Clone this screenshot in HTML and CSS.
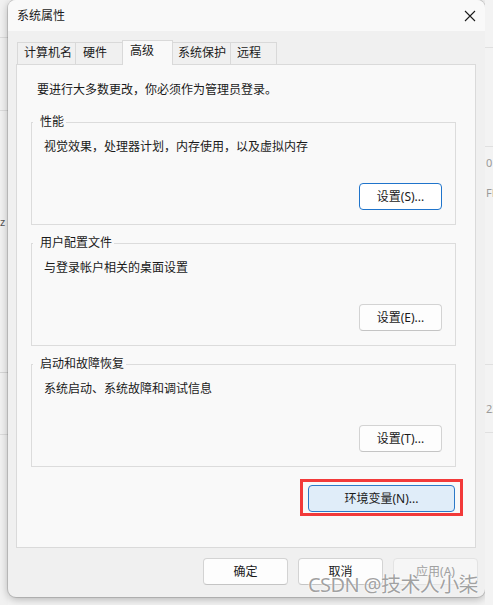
FILE: index.html
```html
<!DOCTYPE html>
<html lang="zh-CN">
<head>
  <meta charset="UTF-8">
  <title>系统属性</title>
  <link rel="stylesheet" href="styles.css">
</head>
<body>
  <div class="side side-left"><span class="frag frag-z">z</span></div>
  <div class="dialog">
    <div class="titlebar">
      <span class="title">系统属性</span>
      <svg class="close" width="12" height="12" viewBox="0 0 12 12">
        <path d="M1 1 L11 11 M11 1 L1 11" stroke="#1b1b1b" stroke-width="1.1" fill="none"/>
      </svg>
    </div>
    <div class="tabs">
      <div class="tab tab-w1">计算机名</div>
      <div class="tab tab-w2">硬件</div>
      <div class="tab tab-w3 active">高级</div>
      <div class="tab tab-w4">系统保护</div>
      <div class="tab tab-w5">远程</div>
    </div>
    <div class="panel">
      <p class="intro">要进行大多数更改，你必须作为管理员登录。</p>
      <fieldset class="group">
        <legend>性能</legend>
        <p class="desc">视觉效果，处理器计划，内存使用，以及虚拟内存</p>
        <div class="group-actions"><button class="btn btn-set focused">设置(S)...</button></div>
      </fieldset>
      <fieldset class="group">
        <legend>用户配置文件</legend>
        <p class="desc">与登录帐户相关的桌面设置</p>
        <div class="group-actions"><button class="btn btn-set">设置(E)...</button></div>
      </fieldset>
      <fieldset class="group">
        <legend>启动和故障恢复</legend>
        <p class="desc">系统启动、系统故障和调试信息</p>
        <div class="group-actions"><button class="btn btn-set">设置(T)...</button></div>
      </fieldset>
      <div class="env-row">
        <div class="highlight"><button class="btn btn-env">环境变量(N)...</button></div>
      </div>
    </div>
    <div class="footer">
      <button class="btn btn-foot">确定</button>
      <button class="btn btn-foot">取消</button>
      <button class="btn btn-foot" disabled>应用(A)</button>
    </div>
    <div class="watermark">CSDN @技术人小柒</div>
  </div>
  <div class="side side-right"><span class="frag frag-0">0</span><span class="frag frag-fd">FD</span><span class="frag frag-22">22</span></div>
</body>
</html>
```

FILE: styles.css
```css
body {
  margin: 0;
  background: #f3f3f3;
  font-family: 'Noto Sans', 'Noto Sans CJK SC', sans-serif;
  font-size: 12px;
  color: #1a1a1a;
  display: flex;
  width: 493px;
  height: 605px;
  overflow: hidden;
}
.side {
  position: relative;
  width: 8px;
  flex: none;
  height: 605px;
  background:
    linear-gradient(#dcdcdc, #dcdcdc) 0 37px / 100% 1px no-repeat,
    linear-gradient(#dcdcdc, #dcdcdc) 0 110px / 100% 1px no-repeat,
    linear-gradient(#d6d6d6, #d6d6d6) 0 372px / 100% 1px no-repeat,
    linear-gradient(#dcdcdc, #dcdcdc) 0 434px / 100% 1px no-repeat,
    #f1f1f1;
}
.side-right {
  background:
    linear-gradient(#e0e0e0, #e0e0e0) 0 47px / 100% 1px no-repeat,
    linear-gradient(#e0e0e0, #e0e0e0) 0 146px / 100% 1px no-repeat,
    linear-gradient(#e0e0e0, #e0e0e0) 0 364px / 100% 1px no-repeat,
    linear-gradient(#e0e0e0, #e0e0e0) 0 432px / 100% 1px no-repeat,
    #f3f3f3;
}
.frag {
  position: absolute;
  font-size: 11px;
  color: #9a9a9a;
  line-height: 12px;
}
.frag-z { left: 0; top: 216px; color: #555; }
.frag-0 { left: 1px; top: 157px; }
.frag-fd { left: 1px; top: 187px; }
.frag-22 { left: 1px; top: 403px; }

.dialog {
  position: relative;
  width: 477px;
  height: 597px;
  flex: none;
  background: #f0f0f0;
  border-radius: 8px;
  box-shadow: 0 0 0 1px rgba(0,0,0,0.13), 0 2px 9px rgba(0,0,0,0.28);
  overflow: hidden;
}
.titlebar {
  height: 31px;
  background: #f9f9f9;
  display: flex;
  align-items: center;
  justify-content: space-between;
  padding: 0 8px 0 9px;
}
.title {
  line-height: 16px;
  color: #1b1b1b;
}
.close {
  margin-right: 1px;
}
.tabs {
  display: flex;
  align-items: flex-end;
  height: 33px;
  padding-left: 9px;
  position: relative;
  z-index: 1;
}
.tab {
  height: 22px;
  box-sizing: border-box;
  border: 1px solid #d9d9d9;
  border-bottom: none;
  border-left: none;
  background: #f0f0f0;
  line-height: 20px;
  padding-left: 6px;
}
.tab:first-child { border-left: 1px solid #d9d9d9; }
.tab-w1 { width: 59px; }
.tab-w2 { width: 47px; padding-left: 7px; }
.tab-w3 { width: 51px; }
.tab-w4 { width: 58px; padding-left: 5px; }
.tab-w5 { width: 46px; }
.tab.active {
  height: 25px;
  background: #f9f9f9;
  border-left: 1px solid #d9d9d9;
  margin-left: -1px;
  margin-bottom: -1px;
  padding-left: 7px;
  line-height: 20px;
}
.panel {
  margin-left: 8px;
  width: 460px;
  height: 484px;
  box-sizing: border-box;
  border: 1px solid #dadada;
  background: #f9f9f9;
  padding: 0 19px 0 14px;
}
.intro {
  margin: 17px 0 0 6px;
  line-height: 16px;
}
.group {
  margin: 16px 0 0 0;
  padding: 9px 13px 14px 12px;
  border: 1px solid #dcdcdc;
  min-width: 0;
}
.group + .group {
  margin-top: 10px;
}
.group legend {
  margin-left: -11px;
  padding: 0 2px 0 7px;
  line-height: 16px;
}
.desc {
  margin: 0;
  line-height: 16px;
}
.group-actions {
  display: flex;
  justify-content: flex-end;
  margin-top: 28px;
}
.btn {
  font-family: 'Noto Sans', 'Noto Sans CJK SC', sans-serif;
  font-size: 12px;
  color: #1a1a1a;
  height: 27px;
  box-sizing: border-box;
  background: #fdfdfd;
  border: 1px solid #d3d3d3;
  border-bottom-color: #c4c4c4;
  border-radius: 4px;
  padding: 0;
  line-height: 16px;
}
.btn-set {
  width: 83px;
}
.btn.focused {
  border: 1px solid #1f74cb;
  background: #ffffff;
}
.env-row {
  display: flex;
  justify-content: flex-end;
  margin: 12px -7px 0 0;
}
.highlight {
  border: 3px solid #f23a3a;
  padding: 3px 5px 1px 5px;
}
.btn-env {
  display: block;
  width: 147px;
  background: #e0edf9;
  border: 1px solid #2c79c8;
}
.footer {
  display: flex;
  justify-content: flex-end;
  gap: 10px;
  margin-top: 10px;
  padding-right: 7px;
}
.btn-foot {
  width: 85px;
}
.btn-foot:disabled {
  color: #a0a0a0;
  background: #f6f6f6;
  border-color: #e3e3e3;
}
.watermark {
  position: absolute;
  right: 7px;
  bottom: 0;
  font-size: 20px;
  line-height: 24px;
  letter-spacing: -0.6px;
  color: rgba(125,125,125,0.72);
  text-shadow: 0 0 2px #fff, 0 0 1px #fff;
  white-space: nowrap;
}
```
